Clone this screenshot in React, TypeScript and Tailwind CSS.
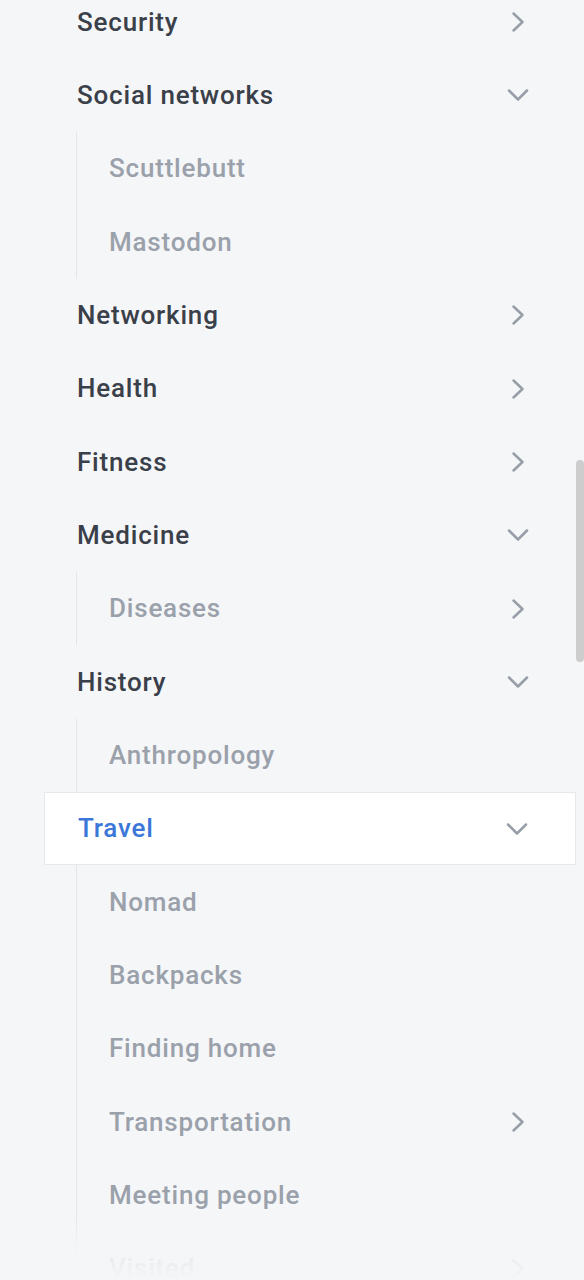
import React from 'react';

type Item = {
  label: string;
  icon?: 'right' | 'down';
  active?: boolean;
  children?: Item[];
};

const menu: Item[] = [
  { label: 'Security', icon: 'right' },
  {
    label: 'Social networks',
    icon: 'down',
    children: [{ label: 'Scuttlebutt' }, { label: 'Mastodon' }],
  },
  { label: 'Networking', icon: 'right' },
  { label: 'Health', icon: 'right' },
  { label: 'Fitness', icon: 'right' },
  { label: 'Medicine', icon: 'down', children: [{ label: 'Diseases', icon: 'right' }] },
  { label: 'History', icon: 'down', children: [{ label: 'Anthropology' }] },
  {
    label: 'Travel',
    icon: 'down',
    active: true,
    children: [
      { label: 'Nomad' },
      { label: 'Backpacks' },
      { label: 'Finding home' },
      { label: 'Transportation', icon: 'right' },
      { label: 'Meeting people' },
      { label: 'Visited', icon: 'right' },
    ],
  },
];

function Chevron({ dir }: { dir: 'right' | 'down' }) {
  return (
    <svg width="24" height="24" viewBox="0 0 24 24" fill="none" stroke="#979ea8" strokeWidth="2.5" strokeLinecap="round" strokeLinejoin="round">
      {dir === 'right' ? <path d="M7.5 3.5 L16.5 12 L7.5 20.5" /> : <path d="M3 7.5 L12 16.5 L21 7.5" />}
    </svg>
  );
}

function Row({ item, sub }: { item: Item; sub?: boolean }) {
  const color = item.active ? 'text-[#3b77d8]' : sub ? 'text-[#9aa1ab]' : 'text-[#3a4049]';
  return (
    <div
      className={`flex h-[73.33px] items-center justify-between pr-[46px] ${sub ? 'pl-[32px]' : 'pl-[33px]'} ${
        item.active ? 'border border-[#e6e8eb] bg-white' : ''
      }`}
    >
      <span className={`text-[26px] font-medium tracking-[0.8px] ${color}`}>{item.label}</span>
      <span className="flex w-[24px] justify-center">{item.icon && <Chevron dir={item.icon} />}</span>
    </div>
  );
}

export default function App() {
  return (
    <div className="relative h-[1280px] w-full overflow-hidden bg-[#f5f6f8] font-['Roboto',sans-serif]">
      <div className="-mt-[14.5px] pl-[44px] pr-[8px]">
        {menu.map((item) => (
          <div key={item.label}>
            <Row item={item} />
            {item.children && (
              <div className="ml-[32px] border-l border-[#e3e5e8]">
                {item.children.map((c) => (
                  <Row key={c.label} item={c} sub />
                ))}
              </div>
            )}
          </div>
        ))}
      </div>
      <div className="absolute bottom-0 left-0 right-0 h-[70px] bg-gradient-to-t from-[#f5f6f8] via-[#f5f6f8]/80 to-transparent" />
      <div className="absolute right-0 top-[460px] h-[202px] w-[8px] rounded-full bg-[#cdcdcd]" />
    </div>
  );
}
